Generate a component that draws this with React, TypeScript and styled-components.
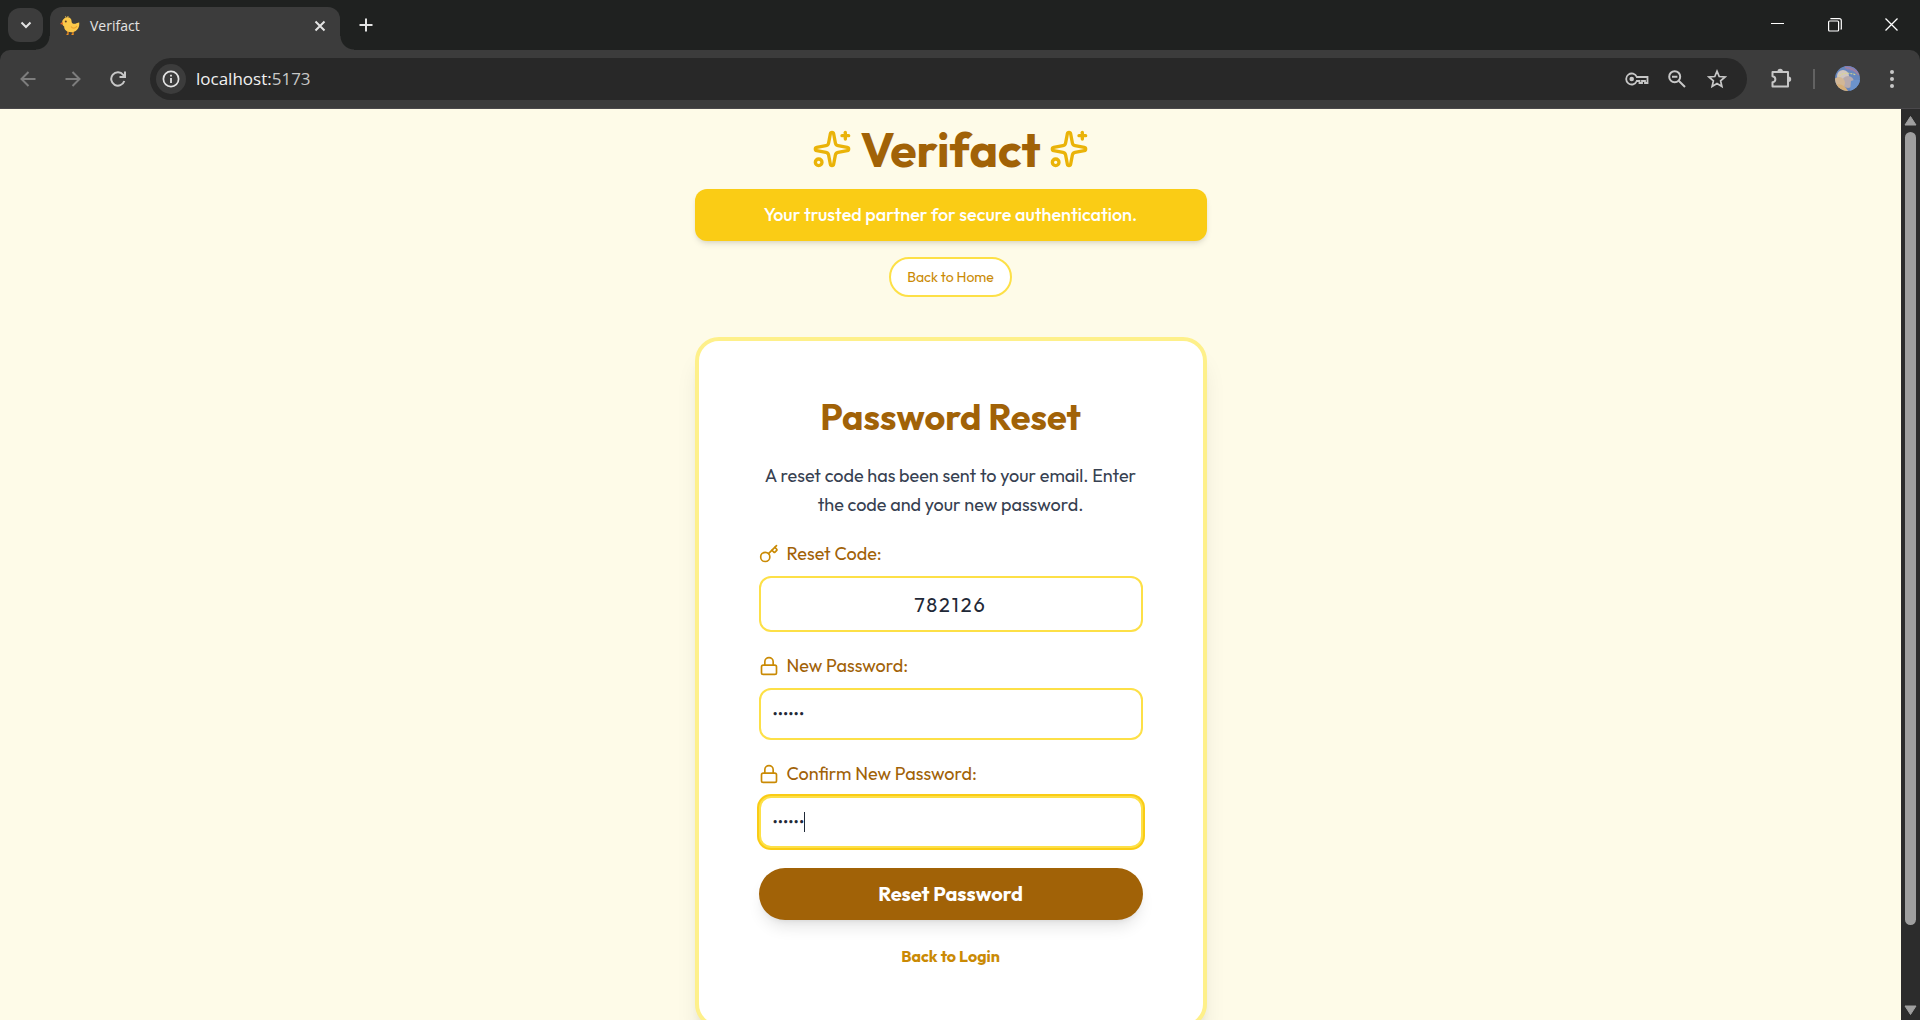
import React, { useState } from "react";
import styled, { createGlobalStyle } from "styled-components";
import { Key, Lock, Sparkles } from "lucide-react";

const GlobalStyle = createGlobalStyle`
  *, *::before, *::after { box-sizing: border-box; }
  body { margin: 0; background: #fefbe8; }
  button, input { font: inherit; }
  h1, h2, p { margin: 0; }
`;

const uiFont = `"Segoe UI", "Open Sans", "Noto Sans", sans-serif`;
const pageFont = `Outfit, Lato, sans-serif`;

const Window = styled.div`
  display: flex;
  flex-direction: column;
  height: 100vh;
  overflow: hidden;
  background: #1f2120;
`;

/* ---------- browser chrome ---------- */

const TabStrip = styled.header`
  display: flex;
  align-items: flex-end;
  height: 50px;
  flex: none;
  padding-left: 8px;
  color: #e3e3e3;
  font-family: ${uiFont};
`;

const PlainButton = styled.button`
  display: flex;
  align-items: center;
  justify-content: center;
  padding: 0;
  border: 0;
  background: none;
  color: inherit;
  flex: none;
`;

const TabSearch = styled(PlainButton)`
  width: 35px;
  height: 34px;
  margin: 0 7px 8px 0;
  border-radius: 12px;
  background: #3c3c3c;
`;

const Tab = styled.div`
  position: relative;
  display: flex;
  align-items: center;
  width: 290px;
  height: 43px;
  padding: 0 10px 6px 10px;
  border-radius: 12px 12px 0 0;
  background: #3c3c3c;
  &::before,
  &::after {
    content: "";
    position: absolute;
    bottom: 0;
    width: 14px;
    height: 14px;
  }
  &::before {
    right: 100%;
    background: radial-gradient(circle at 0 0, transparent 13px, #3c3c3c 14px);
  }
  &::after {
    left: 100%;
    background: radial-gradient(circle at 100% 0, transparent 13px, #3c3c3c 14px);
  }
`;

const TabTitle = styled.span`
  flex: 1;
  margin-left: 10px;
  font-size: 14px;
  line-height: 20px;
`;

const CloseTab = styled(PlainButton)`
  width: 20px;
  height: 20px;
`;

const NewTab = styled(PlainButton)`
  width: 24px;
  height: 24px;
  margin: 0 0 13px 14px;
`;

const WindowControls = styled.div`
  display: flex;
  align-self: flex-start;
  margin-left: auto;
  color: #fff;
`;

const WindowButton = styled(PlainButton)`
  width: 57px;
  height: 49px;
`;

const Toolbar = styled.nav`
  display: flex;
  align-items: center;
  flex: none;
  height: 59px;
  padding: 0 16px 1px 10px;
  border-bottom: 1px solid #4a484b;
  border-radius: 10px 10px 0 0;
  background: #3c3c3c;
  color: #c7c7c7;
  font-family: ${uiFont};
`;

const NavButtons = styled.div`
  display: flex;
  gap: 9px;
  margin-right: 14px;
`;

const ToolButton = styled(PlainButton)<{ $dim?: boolean }>`
  width: 36px;
  height: 36px;
  color: ${(p) => (p.$dim ? "#7d7d7d" : "#c7c7c7")};
`;

const AddressBar = styled.div`
  display: flex;
  align-items: center;
  flex: 1;
  height: 42px;
  padding: 0 18px 0 6px;
  border-radius: 21px;
  background: #282828;
`;

const SiteInfo = styled(PlainButton)`
  width: 30px;
  height: 30px;
  border-radius: 50%;
  background: #3c3c3c;
  color: #e3e3e3;
`;

const Url = styled.span`
  flex: 1;
  margin-left: 10px;
  color: #c7c7c7;
  font-size: 17px;
  line-height: 24px;
`;

const Host = styled.span`
  color: #f1f1f1;
`;

const AddressActions = styled.div`
  display: flex;
  gap: 16px;
`;

const SmallTool = styled(PlainButton)`
  width: 24px;
  height: 24px;
`;

const Extensions = styled(ToolButton)`
  margin-left: 16px;
`;

const Divider = styled.span`
  width: 2px;
  height: 20px;
  margin: 0 20px 0 14px;
  background: #626262;
`;

const Profile = styled(PlainButton)`
  width: 25px;
  height: 25px;
  margin-right: 20px;
  border-radius: 50%;
  overflow: hidden;
`;

/* ---------- page ---------- */

const Viewport = styled.div`
  display: flex;
  flex: 1;
  min-height: 0;
`;

const Page = styled.main`
  display: flex;
  flex-direction: column;
  align-items: center;
  flex: 1;
  min-width: 0;
  padding: 16px;
  overflow: hidden;
  background: #fefbe8;
  font-family: ${pageFont};
`;

const Brand = styled.h1`
  display: flex;
  align-items: center;
  gap: 8px;
  color: #a16207;
  font-size: 48px;
  font-weight: 700;
  line-height: 48px;
  svg {
    color: #eab308;
  }
`;

const Tagline = styled.p`
  width: 100%;
  max-width: 512px;
  margin-top: 16px;
  padding: 12px 24px;
  border-radius: 12px;
  background: #facc15;
  box-shadow: 0 4px 6px -1px rgba(0, 0, 0, 0.1), 0 2px 4px -2px rgba(0, 0, 0, 0.1);
  color: #fff;
  font-size: 18px;
  font-weight: 500;
  line-height: 28px;
  text-align: center;
`;

const HomeButton = styled.button`
  flex: none;
  margin-top: 16px;
  padding: 8px 16px;
  border: 2px solid #fde047;
  border-radius: 20px;
  background: #fff;
  color: #ca8a04;
  font-size: 14px;
  line-height: 20px;
`;

const Card = styled.form`
  display: flex;
  flex-direction: column;
  flex: none;
  gap: 20px;
  width: 100%;
  max-width: 512px;
  margin-top: 40px;
  padding: 56px 60px;
  border: 4px solid #fef08a;
  border-radius: 24px;
  background: #fff;
  box-shadow: 0 20px 25px -5px rgba(0, 0, 0, 0.1), 0 8px 10px -6px rgba(0, 0, 0, 0.1);
`;

const CardTitle = styled.h2`
  margin-bottom: 4px;
  color: #a16207;
  font-size: 36px;
  font-weight: 700;
  line-height: 40px;
  text-align: center;
`;

const Intro = styled.p`
  padding-bottom: 1px;
  color: #374151;
  font-size: 18px;
  line-height: 29px;
  text-align: center;
`;

const Field = styled.div`
  display: flex;
  flex-direction: column;
  gap: 8px;
`;

const FieldLabel = styled.label`
  display: flex;
  align-items: center;
  gap: 8px;
  color: #a16207;
  font-size: 18px;
  line-height: 28px;
  svg {
    color: #ca8a04;
  }
`;

const TextInput = styled.input<{ $code?: boolean; $active?: boolean }>`
  width: 100%;
  height: ${(p) => (p.$code ? 56 : 52)}px;
  padding: 0 12px;
  border: 2px solid #fde047;
  border-radius: 12px;
  outline: 0;
  background: #fff;
  box-shadow: ${(p) => (p.$active ? "0 0 0 2px #facc15" : "none")};
  color: #1f2937;
  font-size: ${(p) => (p.$code ? 20 : 16)}px;
  text-align: ${(p) => (p.$code ? "center" : "left")};
  letter-spacing: ${(p) => (p.$code ? "2px" : "normal")};
`;

const InputWrap = styled.div`
  position: relative;
  display: flex;
`;

const Caret = styled.span`
  position: absolute;
  top: 16px;
  left: 45px;
  width: 1px;
  height: 20px;
  background: #1f2937;
`;

const SubmitButton = styled.button`
  padding: 12px 24px;
  border: 0;
  border-radius: 26px;
  background: #a16207;
  box-shadow: 0 10px 15px -3px rgba(0, 0, 0, 0.1), 0 4px 6px -4px rgba(0, 0, 0, 0.1);
  color: #fff;
  font-size: 20px;
  font-weight: 700;
  line-height: 28px;
`;

const LoginLink = styled.a`
  align-self: center;
  margin-top: 4px;
  color: #ca8a04;
  font-size: 16px;
  font-weight: 700;
  line-height: 24px;
  text-decoration: none;
`;

const Scrollbar = styled.div`
  display: flex;
  flex-direction: column;
  align-items: center;
  flex: none;
  width: 19px;
  background: #2c2c2c;
`;

const ScrollArrow = styled.svg`
  flex: none;
  width: 19px;
  height: 23px;
  fill: #9f9f9f;
`;

const Track = styled.div`
  flex: 1;
  width: 11px;
`;

const Thumb = styled.div`
  height: calc(100% * 11 / 12);
  border-radius: 6px;
  background: #9f9f9f;
`;

function Chick() {
  return (
    <svg width="20" height="20" viewBox="0 0 20 20" aria-hidden="true">
      <path d="M8 14.5v3.5M13 14.5v3.5M6.5 18.3h2M11.5 18.3h2.2" stroke="#f19020" strokeWidth="1.3" fill="none" />
      <path
        d="M6.500 1.500C9.500 .8 11.700 2.800 11.600 5.500C11.600 7.500 13.500 8.200 15.500 7.700C17 7.300 18.300 6.200 19.200 6.600C19.800 10 18 15.800 12 16.200C7 16.500 4 14 4.200 10.500C2.800 9.500 2 8 2.100 6.200C2.200 3.800 4 2 6.500 1.500Z"
        fill="#fcc94a"
      />
      <path d="M11 10.500C12.500 12.800 15.500 12.500 17 10.200" stroke="#eda42f" strokeWidth="1.200" fill="none" />
      <path d="M2.400 5.800 0 8l3.200 .8Z" fill="#e2682d" />
      <path d="M6 1.800 5.500 .3M7.500 1.500 8.200 0" stroke="#fcc94a" strokeWidth=".9" />
      <circle cx="5.800" cy="5.600" r="1" fill="#5c3b25" />
    </svg>
  );
}

function Avatar() {
  return (
    <svg width="25" height="25" viewBox="0 0 25 25" aria-hidden="true">
      <rect width="25" height="25" fill="#6787bd" />
      <path d="M9 0h16v7L12 4Z" fill="#7d80bb" />
      <path d="M10 1.500Q18 1.500 24 9" stroke="#a4809b" strokeWidth="1.300" fill="none" />
      <circle cx="8" cy="10" r="6" fill="#d0c5c0" />
      <circle cx="13" cy="16" r="6" fill="#b6aaae" />
      <circle cx="4" cy="17" r="6" fill="#d3b795" />
      <path d="M0 19q8-3 13 6H0Z" fill="#d6ae77" />
      <path d="M16 15q5-2 9-1v11H15Z" fill="#6c93cb" />
      <path d="M4 10Q11 5 21 9" stroke="#d8d78c" strokeWidth="1.100" strokeDasharray="2 1" fill="none" />
    </svg>
  );
}

const line = { fill: "none", stroke: "currentColor", strokeWidth: 2 } as const;

export default function App() {
  const [code, setCode] = useState("782126");
  const [password, setPassword] = useState("secret");
  const [confirm, setConfirm] = useState("secret");

  return (
    <Window>
      <GlobalStyle />
      <TabStrip>
        <TabSearch aria-label="Search tabs">
          <svg width="12" height="8" viewBox="0 0 12 8" {...line}><path d="m1.500 1.500 4.500 4.500 4.500-4.500" /></svg>
        </TabSearch>
        <Tab>
          <Chick />
          <TabTitle>Verifact</TabTitle>
          <CloseTab aria-label="Close tab">
            <svg width="12" height="12" viewBox="0 0 12 12" {...line}><path d="m1.500 1.500 9 9m0-9-9 9" /></svg>
          </CloseTab>
        </Tab>
        <NewTab aria-label="New tab">
          <svg width="14" height="14" viewBox="0 0 14 14" {...line}><path d="M7 .5v13M.5 7h13" /></svg>
        </NewTab>
        <WindowControls>
          <WindowButton aria-label="Minimize">
            <svg width="13" height="13" viewBox="0 0 13 13"><path d="M0 5.500h13" stroke="currentColor" /></svg>
          </WindowButton>
          <WindowButton aria-label="Restore">
            <svg width="14" height="14" viewBox="0 0 14 14" fill="none" stroke="currentColor" strokeWidth="1.200">
              <rect x=".6" y="3" width="10" height="10" rx="1" />
              <path d="M3 1.200V.7h8.300Q13.300 .7 13.300 2.700V11h-.8" />
            </svg>
          </WindowButton>
          <WindowButton aria-label="Close">
            <svg width="13" height="13" viewBox="0 0 13 13"><path d="m.5.5 12 12m0-12-12 12" stroke="currentColor" strokeWidth="1.300" /></svg>
          </WindowButton>
        </WindowControls>
      </TabStrip>

      <Toolbar>
        <NavButtons>
          <ToolButton $dim aria-label="Back">
            <svg width="16" height="16" viewBox="0 0 16 16" {...line}><path d="M15.500 8H2M8.500 1 1.500 8l7 7" /></svg>
          </ToolButton>
          <ToolButton $dim aria-label="Forward">
            <svg width="16" height="16" viewBox="0 0 16 16" {...line}><path d="M.5 8H14M7.500 1l7 7-7 7" /></svg>
          </ToolButton>
          <ToolButton aria-label="Reload">
            <svg width="16" height="16" viewBox="0 0 16 16" {...line}>
              <path d="M14.300 10A6.700 6.700 0 1 1 13.200 3.800L15 6" />
              <path d="M15 .5V6H9.500" />
            </svg>
          </ToolButton>
        </NavButtons>
        <AddressBar>
          <SiteInfo aria-label="View site information">
            <svg width="18" height="18" viewBox="0 0 18 18" {...line}>
              <circle cx="9" cy="9" r="7.600" strokeWidth="1.700" />
              <path d="M9 8v5M9 4.800v1.800" strokeWidth="1.800" />
            </svg>
          </SiteInfo>
          <Url><Host>localhost:</Host>5173</Url>
          <AddressActions>
            <SmallTool aria-label="Manage passwords">
              <svg width="24" height="14" viewBox="0 0 24 14" {...line}>
                <path d="M11.800 5H22.500v6H20V9h-3v2h-2.500V9h-2.700A5.500 5.500 0 1 1 11.800 5Z" strokeWidth="1.800" />
                <circle cx="6.700" cy="7" r="2.300" fill="currentColor" stroke="none" />
              </svg>
            </SmallTool>
            <SmallTool aria-label="Zoom">
              <svg width="18" height="18" viewBox="0 0 18 18" {...line}>
                <circle cx="6.700" cy="6.700" r="5.500" /><path d="m10.700 10.700 6.300 6.300M4 6.700h5.400" />
              </svg>
            </SmallTool>
            <SmallTool aria-label="Bookmark this page">
              <svg width="20" height="20" viewBox="0 0 20 20" {...line}>
                <path d="m10 2.200 2.200 5.300 5.800.5-4.400 3.800 1.300 5.700-4.900-3-4.900 3 1.300-5.700L2 8l5.800-.5Z" strokeWidth="1.700" />
              </svg>
            </SmallTool>
          </AddressActions>
        </AddressBar>
        <Extensions aria-label="Extensions">
          <svg width="22" height="22" viewBox="0 0 22 22" {...line}>
            <path d="M2.500 4h15.500v5v9.500H2.500v-4.300c3.800-.5 3.800-5.500 0-6Z" strokeLinejoin="round" />
            <path d="M7.500 3.500a2.700 2.700 0 0 1 5.400 0ZM18.500 8.500a2.700 2.700 0 0 1 0 5.400Z" fill="currentColor" stroke="none" />
          </svg>
        </Extensions>
        <Divider />
        <Profile aria-label="Profile"><Avatar /></Profile>
        <SmallTool aria-label="Menu">
          <svg width="4" height="18" viewBox="0 0 4 18" fill="currentColor">
            <circle cx="2" cy="2" r="2" /><circle cx="2" cy="9" r="2" /><circle cx="2" cy="16" r="2" />
          </svg>
        </SmallTool>
      </Toolbar>

      <Viewport>
        <Page>
          <Brand>
            <Sparkles size={40} />
            Verifact
            <Sparkles size={40} />
          </Brand>
          <Tagline>Your trusted partner for secure authentication.</Tagline>
          <HomeButton type="button">Back to Home</HomeButton>

          <Card onSubmit={(e) => e.preventDefault()}>
            <CardTitle>Password Reset</CardTitle>
            <Intro>A reset code has been sent to your email. Enter the code and your new password.</Intro>
            <Field>
              <FieldLabel htmlFor="code"><Key size={20} strokeWidth={2} />Reset Code:</FieldLabel>
              <TextInput id="code" $code value={code} onChange={(e) => setCode(e.target.value)} />
            </Field>
            <Field>
              <FieldLabel htmlFor="password"><Lock size={20} strokeWidth={2} />New Password:</FieldLabel>
              <TextInput id="password" type="password" value={password} onChange={(e) => setPassword(e.target.value)} />
            </Field>
            <Field>
              <FieldLabel htmlFor="confirm"><Lock size={20} strokeWidth={2} />Confirm New Password:</FieldLabel>
              <InputWrap>
                <TextInput id="confirm" type="password" $active value={confirm} onChange={(e) => setConfirm(e.target.value)} />
                <Caret />
              </InputWrap>
            </Field>
            <SubmitButton type="submit">Reset Password</SubmitButton>
            <LoginLink href="#login">Back to Login</LoginLink>
          </Card>
        </Page>
        <Scrollbar aria-hidden="true">
          <ScrollArrow viewBox="0 0 19 22"><path d="M9.500 7 15 15.500H4Z" stroke="#9f9f9f" strokeLinejoin="round" /></ScrollArrow>
          <Track><Thumb /></Track>
          <ScrollArrow viewBox="0 0 19 22"><path d="M9.500 17 15 8.500H4Z" stroke="#9f9f9f" strokeLinejoin="round" /></ScrollArrow>
        </Scrollbar>
      </Viewport>
    </Window>
  );
}
